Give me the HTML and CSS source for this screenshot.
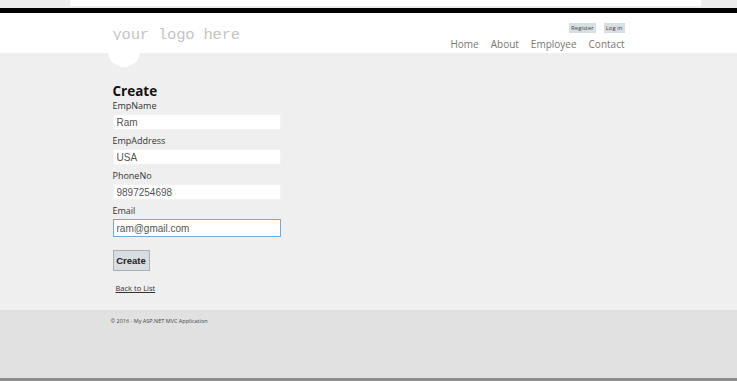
FILE: index.html
```html
<!DOCTYPE html>
<html lang="en">
<head>
    <meta charset="UTF-8">
    <title>Create - My ASP.NET Application</title>
    <link rel="stylesheet" href="styles.css">
</head>
<body>
    <div class="chrome"><div class="chrome-bar"></div></div>
    <div class="topbar"></div>

    <header class="header">
        <div class="container header-inner">
            <div class="logo">your logo here</div>
            <div class="header-right">
                <div class="login">
                    <a href="#">Register</a>
                    <a href="#">Log in</a>
                </div>
                <nav class="menu">
                    <a href="#">Home</a>
                    <a href="#">About</a>
                    <a href="#">Employee</a>
                    <a href="#">Contact</a>
                </nav>
            </div>
        </div>
    </header>

    <div class="main">
        <div class="container">
            <h2>Create</h2>
            <form>
                <label>EmpName</label>
                <input type="text" value="Ram">
                <label>EmpAddress</label>
                <input type="text" value="USA">
                <label>PhoneNo</label>
                <input type="text" value="9897254698">
                <label>Email</label>
                <input type="text" class="focused" value="ram@gmail.com">
                <button type="button">Create</button>
            </form>
            <a href="#" class="back">Back to List</a>
        </div>
    </div>

    <footer class="footer">
        <div class="container">
            <p>&copy; 2016 - My ASP.NET MVC Application</p>
        </div>
    </footer>
    <div class="bottomline"></div>
</body>
</html>
```

FILE: styles.css
```css
body {
    margin: 0;
    font-family: "Open Sans", "Noto Sans", sans-serif;
    color: #333;
    background: #efefef;
}
.container {
    width: 512px;
    margin: 0 auto;
}
.chrome {
    height: 8px;
    background: #ececec;
    padding: 0 36px 0 70px;
}
.chrome-bar {
    height: 6px;
    background: #fff;
}
.topbar {
    height: 5px;
    background: #000;
}
.header {
    background: #fff;
    height: 40px;
}
.header-inner {
    display: flex;
    justify-content: space-between;
    position: relative;
}
.header-inner::after {
    content: "";
    position: absolute;
    left: -5px;
    top: 27px;
    width: 32px;
    height: 27px;
    border-radius: 0 0 16px 16px;
    background: #fff;
}
.logo {
    font-family: "Liberation Mono", "DejaVu Sans Mono", monospace;
    font-size: 15.5px;
    letter-spacing: -0.2px;
    color: #c4c4c4;
    padding-top: 13px;
}
.header-right {
    display: flex;
    flex-direction: column;
    align-items: flex-end;
    padding-top: 10px;
}
.login {
    display: flex;
    gap: 8px;
}
.login a {
    font-size: 6px;
    color: #444;
    background: #d9e0e3;
    padding: 1px 2px;
    text-decoration: none;
    line-height: 8px;
}
.menu {
    display: flex;
    gap: 12px;
    margin-top: 4px;
}
.menu a {
    font-size: 10px;
    color: #777;
    text-decoration: none;
}
.main {
    padding-top: 29px;
    height: 228px;
}
h2 {
    font-size: 13.5px;
    line-height: 18px;
    margin: 0;
    color: #111;
    font-weight: bold;
}
form label {
    display: block;
    font-size: 9px;
    line-height: 11px;
    margin-bottom: 3px;
    color: #333;
}
form input {
    display: block;
    box-sizing: border-box;
    width: 168px;
    height: 16px;
    border: 1px solid #f2f2f2;
    background: #fff;
    font-family: "Liberation Sans", Arial, sans-serif;
    font-size: 10px;
    color: #555;
    padding: 0 3px;
    margin-bottom: 5px;
}
form input.focused {
    border: 1px solid #7aa5d6;
    height: 18px;
    margin-bottom: 13px;
}
form button {
    display: block;
    font-family: "Liberation Sans", Arial, sans-serif;
    font-size: 9.5px;
    font-weight: bold;
    color: #222;
    background: #d8dde1;
    border: 1px solid #a9b0b5;
    width: 37px;
    height: 21px;
    padding: 0;
}
.back {
    display: inline-block;
    margin: 12px 0 0 3px;
    font-size: 7.5px;
    color: #333;
}
.footer {
    background: #e1e1e1;
    height: 68px;
}
.footer p {
    margin: 0;
    padding-top: 7px;
    margin-left: -2px;
    font-size: 5.5px;
    color: #444;
}
.bottomline {
    height: 3px;
    background: #8c8c8c;
}
```
